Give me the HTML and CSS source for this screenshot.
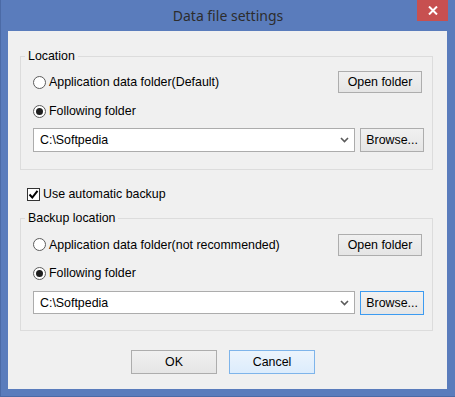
FILE: index.html
```html
<!doctype html>
<html lang="en">
	<head>
		<meta charset="utf-8">
		<title>Data file settings</title>
		<link rel="stylesheet" href="styles.css">
	</head>
	<body>
		<div class="window">
			<div class="titlebar">
				<span class="title">Data file settings</span>
				<button class="close" title="Close">
					<svg width="10" height="9" viewBox="0 0 10 9">
						<path d="M1 0.5 L9 8.5 M9 0.5 L1 8.5" stroke="#fff" stroke-width="2" />
					</svg>
				</button>
			</div>
			<div class="client">
				<fieldset class="group group-location">
					<legend>Location</legend>
					<div class="row row-first">
						<label class="radio"><span class="dot"></span>Application data folder(Default)</label>
						<button class="btn btn-open">Open folder</button>
					</div>
					<div class="row row-second">
						<label class="radio checked"><span class="dot"></span>Following folder</label>
					</div>
					<div class="row row-path">
						<div class="combo">
							<span>C:\Softpedia</span>
							<svg class="chevron" width="9" height="6" viewBox="0 0 9 6">
								<path d="M1 1 L4.5 4.5 L8 1" stroke="#5a5a5a" stroke-width="1.6" fill="none" />
							</svg>
						</div>
						<button class="btn btn-browse">Browse...</button>
					</div>
				</fieldset>

				<label class="check"><span class="box">
					<svg width="11" height="11" viewBox="0 0 11 11">
						<path d="M1.5 5.5 L4.3 8.5 L9.5 1.8" stroke="#000" stroke-width="2" fill="none" />
					</svg>
				</span>Use automatic backup</label>

				<fieldset class="group group-backup">
					<legend>Backup location</legend>
					<div class="row row-first">
						<label class="radio"><span class="dot"></span>Application data folder(not recommended)</label>
						<button class="btn btn-open">Open folder</button>
					</div>
					<div class="row row-second">
						<label class="radio checked"><span class="dot"></span>Following folder</label>
					</div>
					<div class="row row-path">
						<div class="combo">
							<span>C:\Softpedia</span>
							<svg class="chevron" width="9" height="6" viewBox="0 0 9 6">
								<path d="M1 1 L4.5 4.5 L8 1" stroke="#5a5a5a" stroke-width="1.6" fill="none" />
							</svg>
						</div>
						<button class="btn btn-browse focused">Browse...</button>
					</div>
				</fieldset>

				<div class="actions">
					<button class="btn btn-action">OK</button>
					<button class="btn btn-action default">Cancel</button>
				</div>
			</div>
		</div>
	</body>
</html>
```

FILE: styles.css
```css
html, body {
	margin: 0;
	padding: 0;
}

body {
	font-family: "Liberation Sans", Arial, sans-serif;
	font-size: 12.4px;
	color: #000;
	background: #5a7cbc;
}

.window {
	width: 455px;
	height: 397px;
	background: #5a7cbc;
	box-sizing: border-box;
	border-left: 1px solid #4b6aa6;
	border-bottom: 1px solid #4b6aa6;
}

.titlebar {
	height: 31px;
	display: flex;
	align-items: center;
	justify-content: center;
	position: relative;
}

.title {
	font-family: "Noto Sans", "Open Sans", sans-serif;
	font-size: 14px;
	color: #2d2d2d;
	margin-top: -1px;
}

.close {
	position: absolute;
	top: 0;
	right: 7px;
	width: 31px;
	height: 21px;
	border: none;
	padding: 0;
	background: #c75050;
	display: flex;
	align-items: center;
	justify-content: center;
}

.client {
	margin: 0 8px 0 7px;
	height: 358px;
	background: #f0f0f0;
	padding-top: 18px;
	box-sizing: border-box;
}

.group {
	margin: 0 14px 0 12px;
	padding: 0 8px 0 12px;
	border: 1px solid #dcdcdc;
	box-sizing: border-box;
	min-width: 0;
}

.group legend {
	padding: 0 3px;
	margin-left: -8px;
	line-height: 14px;
}

.group-location {
	height: 121px;
}

.group-backup {
	height: 120px;
}

.row {
	display: flex;
	align-items: center;
}

.row-first {
	height: 22px;
	margin-top: 8px;
	justify-content: space-between;
}

.row-second {
	height: 22px;
	margin-top: 7px;
}

.row-path {
	height: 24px;
	margin-top: 6px;
	gap: 5px;
}

.group-backup .row-first {
	margin-top: 9px;
	height: 21px;
}

.group-backup .row-second {
	margin-top: 7px;
}

.group-backup .row-path {
	margin-top: 7px;
	height: 23px;
}

.radio {
	display: flex;
	align-items: center;
	gap: 3px;
}

.dot {
	width: 11px;
	height: 11px;
	border: 1px solid #5c5c5c;
	border-radius: 50%;
	background: #fff;
	position: relative;
}

.radio.checked .dot::after {
	content: "";
	position: absolute;
	left: 2px;
	top: 2px;
	width: 7px;
	height: 7px;
	border-radius: 50%;
	background: #1f1f1f;
}

.btn {
	font-family: "Liberation Sans", Arial, sans-serif;
	font-size: 12.4px;
	color: #000;
	border: 1px solid #adadad;
	background: linear-gradient(#f0f0f0, #e5e5e5);
	padding: 0;
	box-sizing: border-box;
}

.btn-open {
	width: 84px;
	height: 22px;
	margin-right: 2px;
}

.btn-browse {
	width: 64px;
	height: 24px;
}

.btn-browse.focused {
	border-color: #3c9bf1;
	background: linear-gradient(#f2f2f2, #e6e6e6);
}

.combo {
	width: 323px;
	height: 24px;
	box-sizing: border-box;
	border: 1px solid #acacac;
	background: #fff;
	display: flex;
	align-items: center;
	justify-content: space-between;
	padding: 0 5px 0 6px;
}

.group-backup .combo {
	height: 23px;
}

.check {
	display: flex;
	align-items: center;
	gap: 3px;
	margin: 17px 0 0 19px;
	height: 14px;
}

.box {
	width: 11px;
	height: 11px;
	border: 1px solid #333;
	background: #fff;
	display: flex;
}

.group-backup {
	margin-top: 10px;
}

.actions {
	display: flex;
	gap: 12px;
	padding-left: 123px;
	margin-top: 19px;
}

.btn-action {
	width: 86px;
	height: 24px;
}

.btn-action.default {
	border-color: #7eb4ea;
	background: linear-gradient(#ecf4fc, #dcecfc);
}
```
